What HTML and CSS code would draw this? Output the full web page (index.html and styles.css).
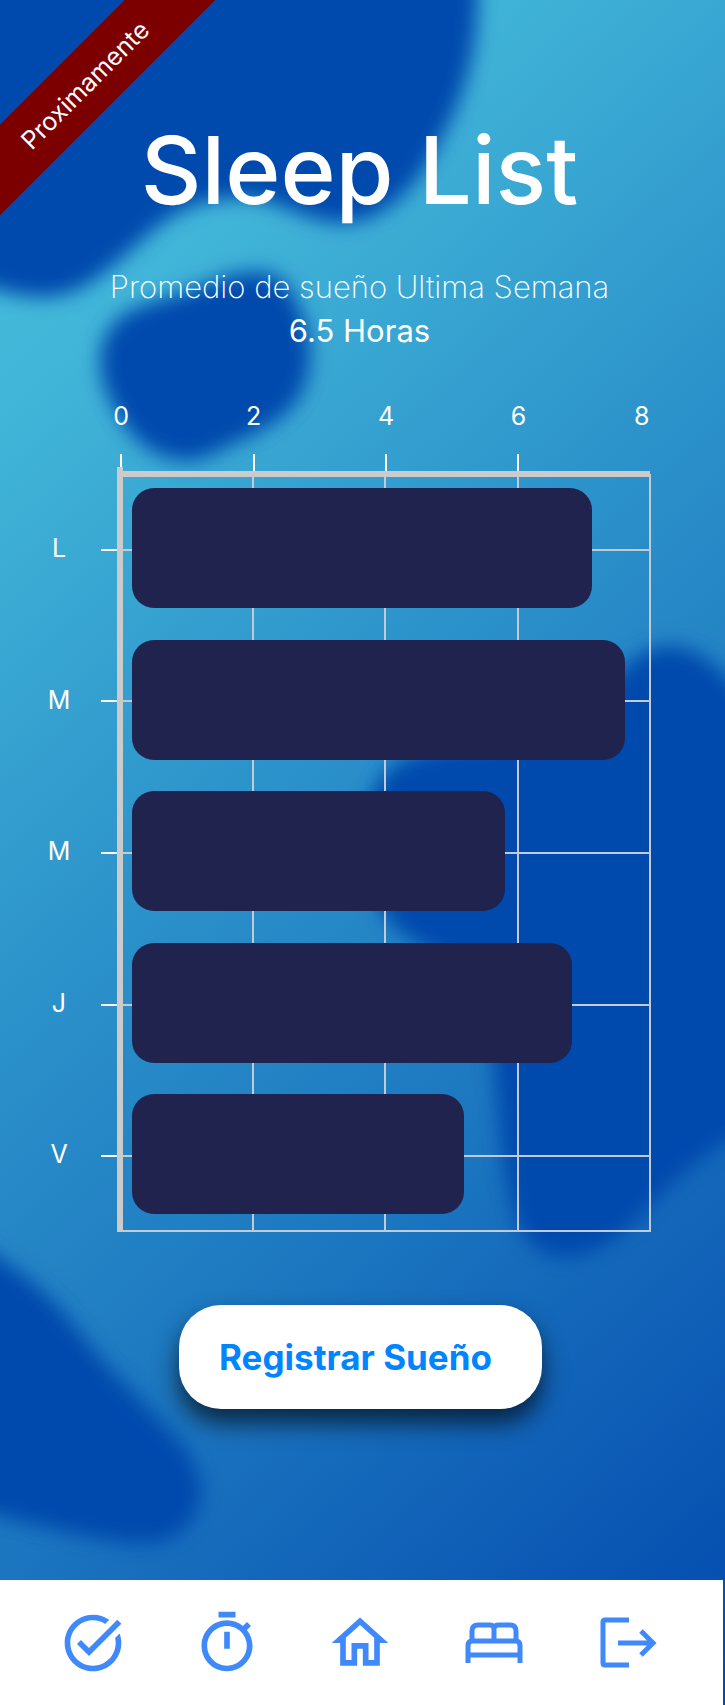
FILE: index.html
```html
<!DOCTYPE html>
<html lang="es">
<head>
<meta charset="utf-8">
<meta name="viewport" content="width=device-width, initial-scale=1">
<title>Sleep List</title>
<link rel="stylesheet" href="styles.css">
</head>
<body>
<div class="page">
  <svg class="blobs" viewBox="0 0 725 1580" preserveAspectRatio="none" aria-hidden="true">
    <defs><filter id="soft" x="-20%" y="-20%" width="140%" height="140%"><feGaussianBlur stdDeviation="10"/></filter></defs>
    <g fill="#004aad" filter="url(#soft)">
      <path d="M-60-60H478V0C476 60 464 100 434 152C412 195 378 223 342 223C305 223 280 198 240 198C195 198 170 214 139 243C105 273 80 297 44 297C20 297 0 292-60 270Z"/>
      <path d="M259 272C285 273 292 292 301 312C314 342 312 372 302 392C288 420 257 433 231 445C205 458 195 463 178 460C140 454 120 422 109 397C97 372 98 347 109 330C123 307 150 304 185 292C210 284 230 271 259 272Z"/>
      <path d="M780 730C745 710 720 648 670 646C620 648 610 700 560 725C500 750 440 740 398 762C368 785 360 815 370 860C375 915 390 932 440 955C485 985 492 1030 496 1090C502 1150 505 1195 520 1228C535 1255 555 1259 575 1257C610 1252 638 1218 663 1193C690 1168 720 1140 780 1112Z"/>
      <path d="M-60 1222C0 1255 40 1284 70 1320C100 1362 130 1388 162 1422C190 1450 205 1475 201 1500C193 1525 180 1538 160 1542C120 1550 50 1527-60 1502Z"/>
    </g>
  </svg>
  <span class="ribbon">Proximamente</span>

  <main class="content">
    <header class="intro">
      <h1 class="title">Sleep List</h1>
      <p class="caption">Promedio de sueño Ultima Semana</p>
      <p class="average">6.5 Horas</p>
    </header>

    <section class="chart" aria-label="Horas de sueño por día">
      <ol class="scale">
        <li>0</li><li>2</li><li>4</li><li>6</li><li class="scale-end">8</li>
      </ol>
      <div class="plot">
        <div class="grid" aria-hidden="true"><i></i><i></i><i></i><i></i></div>
        <ol class="days">
          <li class="day"><span class="day-name">L</span><span class="track"><span class="bar" style="width:88.8%"></span></span></li>
          <li class="day"><span class="day-name">M</span><span class="track"><span class="bar" style="width:95.2%"></span></span></li>
          <li class="day"><span class="day-name">M</span><span class="track"><span class="bar" style="width:72.1%"></span></span></li>
          <li class="day"><span class="day-name">J</span><span class="track"><span class="bar" style="width:84.9%"></span></span></li>
          <li class="day"><span class="day-name">V</span><span class="track"><span class="bar" style="width:64.1%"></span></span></li>
        </ol>
        <div class="axes" aria-hidden="true"></div>
      </div>
    </section>

    <button class="register" type="button">Registrar Sueño</button>
  </main>

  <nav class="tabs" aria-label="Principal">
    <a href="#tareas" aria-label="Tareas"><svg viewBox="0 0 24 24"><path d="M22 5.18 10.59 16.6l-4.24-4.24 1.41-1.41 2.83 2.83 10-10L22 5.18zm-2.21 5.04c.13.57.21 1.17.21 1.78 0 4.42-3.58 8-8 8s-8-3.58-8-8 3.58-8 8-8c1.58 0 3.04.46 4.28 1.25l1.44-1.44C16.1 2.67 14.13 2 12 2 6.48 2 2 6.48 2 12s4.48 10 10 10 10-4.48 10-10c0-1.19-.22-2.33-.6-3.39l-1.61 1.61z"/></svg></a>
    <a href="#tiempo" aria-label="Cronómetro"><svg viewBox="0 0 24 24"><path d="M15 1H9v2h6V1zm-4 13h2V8h-2v6zm8.03-6.61 1.42-1.42c-.43-.51-.9-.99-1.41-1.41l-1.42 1.42C16.07 4.74 14.12 4 12 4c-4.97 0-9 4.03-9 9s4.02 9 9 9 9-4.03 9-9c0-2.12-.74-4.07-1.97-5.61zM12 20c-3.87 0-7-3.13-7-7s3.13-7 7-7 7 3.13 7 7-3.13 7-7 7z"/></svg></a>
    <a href="#inicio" aria-label="Inicio"><svg viewBox="0 0 24 24"><path d="m12 5.69 5 4.5V18h-2v-6H9v6H7v-7.81l5-4.5M12 3 2 12h3v8h6v-6h2v6h6v-8h3L12 3z"/></svg></a>
    <a href="#sueno" aria-label="Sueño"><svg viewBox="0 0 68 68"><g fill="none" stroke="#4089fb" stroke-width="5"><path d="M8 54V37Q8 32 12 32H56Q60 32 60 37V54M8 46H60M12 32V22Q12 16 18 16H30Q34 16 34 20Q34 16 38 16H50Q56 16 56 22V32M34 19V32"/></g></svg></a>
    <a href="#salir" aria-label="Salir"><svg viewBox="0 0 68 68"><g fill="none" stroke="#4089fb" stroke-width="5"><path d="M35 11H11Q9 11 9 13V54Q9 56 11 56H35M24 34H58M47 22L59 34L47 46"/></g></svg></a>
  </nav>
</div>
</body>
</html>
```

FILE: styles.css
```css
* { box-sizing: border-box; }

body {
  margin: 0;
  font-family: Inter, "Liberation Sans", sans-serif;
  color: #fff;
}

h1, p, ol { margin: 0; padding: 0; }
ol { list-style: none; }

.page {
  position: relative;
  display: flex;
  flex-direction: column;
  min-height: 100vh;
  overflow: hidden;
  background: linear-gradient(138deg, #47c2dc 0%, #41b5d8 18%, #2d94cb 42%, #1b75bf 67%, #0b58b4 88%, #0049ad 100%);
}

.blobs {
  position: absolute;
  top: 0;
  left: 0;
  width: 100%;
  height: calc(100% - 125px);
}

.ribbon {
  position: absolute;
  top: 53px;
  left: -115px;
  width: 400px;
  height: 64px;
  line-height: 64px;
  text-align: center;
  font-size: 25px;
  background: #7d0000;
  transform: rotate(-45deg);
}

.content {
  position: relative;
  flex: 1;
  display: flex;
  flex-direction: column;
  align-items: center;
}

.intro {
  padding: 110px 6px 0 0;
  text-align: center;
}

.title {
  font-size: 94px;
  line-height: 120px;
  font-weight: 500;
}

.caption {
  margin-top: 35px;
  font-size: 31px;
  line-height: 44px;
  font-weight: 200;
}

.average {
  font-size: 31px;
  line-height: 43px;
}

.chart {
  align-self: stretch;
  margin-top: 48px;
}

.scale {
  display: grid;
  grid-template-columns: repeat(5, 1fr);
  padding: 0 8px 0 55px;
  font-size: 25px;
  line-height: 32px;
  text-align: center;
}

.scale li::after {
  content: "";
  display: block;
  width: 2px;
  height: 20px;
  margin: 22px auto 0;
  background: #fff;
}

.scale .scale-end { padding-right: 18px; }
.scale .scale-end::after { visibility: hidden; }

.plot {
  position: relative;
  height: 758px;
}

.grid {
  position: absolute;
  inset: 0 74px 0 121px;
  display: grid;
  grid-template-columns: repeat(4, 1fr);
  border-bottom: 2px solid #c0cbd6;
}

.grid i { border-right: 2px solid #c0cbd6; }

.axes {
  position: absolute;
  inset: -7px 75px 0 117px;
  border-left: 6px solid #cbcbcb;
}

.axes::before {
  content: "";
  display: block;
  height: 6px;
  margin-top: 4px;
  background: #cbcbcb;
}

.days {
  position: relative;
  display: grid;
  grid-template-rows: repeat(5, 1fr);
  height: 100%;
}

.day {
  display: grid;
  grid-template-columns: 101px 1fr;
  padding-right: 75px;
}

.day-name {
  padding: 58px 0 0 17px;
  text-align: center;
  font-size: 25px;
  line-height: 32px;
}

.track {
  padding: 14px 0 0 31px;
  background: linear-gradient(90deg, #fff 16px, #c0cbd6 16px) center / 100% 2px no-repeat;
}

.bar {
  display: block;
  height: 120px;
  border-radius: 22px;
  background: #1f234d;
}

.register {
  height: 104px;
  margin: 73px 4px 0 0;
  padding: 0 50px 0 40px;
  border: 0;
  border-radius: 42px;
  background: #fff;
  color: #0085ff;
  font: 700 35px/44px Inter, "Liberation Sans", sans-serif;
  box-shadow: 0 14px 24px rgba(0, 0, 0, .65);
}

.tabs {
  position: relative;
  display: grid;
  grid-template-columns: repeat(5, 1fr);
  align-items: center;
  height: 125px;
  margin-right: 2px;
  padding: 0 28px 0 26px;
  background: #fff;
}

.tabs a {
  display: flex;
  justify-content: center;
}

.tabs svg {
  width: 68px;
  height: 68px;
  fill: #4089fb;
}
```
